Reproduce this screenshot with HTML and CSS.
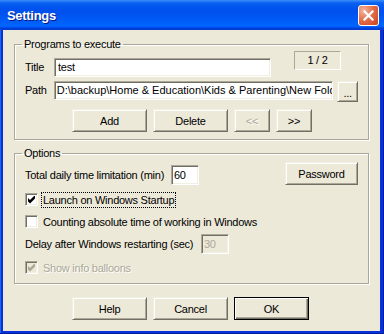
FILE: index.html
```html
<!DOCTYPE html>
<html>
<head>
<meta charset="utf-8">
<link rel="stylesheet" href="styles.css">
</head>
<body>
<div class="window">
  <div class="titlebar">
    <span class="title">Settings</span>
    <span class="close"><svg width="11" height="11" viewBox="0 0 11 11"><path d="M1.5 1.5 L9.5 9.5 M9.5 1.5 L1.5 9.5" stroke="#fff" stroke-width="2.2" stroke-linecap="square"/></svg></span>
  </div>
  <div class="client">
    <fieldset class="group g1">
      <legend>Programs to execute</legend>
      <div class="r1">
        <div class="field">
          <span class="lbl lbl-s">Title</span>
          <div class="edit e-title">test</div>
        </div>
        <div class="counter">1 / 2</div>
      </div>
      <div class="r2">
        <span class="lbl lbl-s">Path</span>
        <div class="edit e-path">D:\backup\Home &amp; Education\Kids &amp; Parenting\New Folder</div>
        <div class="btn b-browse">...</div>
      </div>
      <div class="btnrow">
        <div class="btn">Add</div>
        <div class="btn">Delete</div>
        <div class="btn narrow dis">&lt;&lt;</div>
        <div class="btn narrow">&gt;&gt;</div>
      </div>
    </fieldset>
    <fieldset class="group g2">
      <legend>Options</legend>
      <div class="o1">
        <div class="field-o">
          <span class="lbl lbl-total">Total daily time limitation (min)</span>
          <div class="edit e-num">60</div>
        </div>
        <div class="btn b-pass">Password</div>
      </div>
      <div class="check-row">
        <span class="cb"><svg width="11" height="11" viewBox="0 0 11 11"><polygon points="2,4 4,6 8,2 9,2 9,4.6 4,9.6 2,7.6" fill="#000"/></svg></span>
        <span class="cb-label focus">Launch on Windows Startup</span>
      </div>
      <div class="check-row">
        <span class="cb"></span>
        <span class="cb-label">Counting absolute time of working in Windows</span>
      </div>
      <div class="o4">
        <span class="lbl lbl-delay">Delay after Windows restarting (sec)</span>
        <div class="edit e-num dis">30</div>
      </div>
      <div class="check-row last">
        <span class="cb dis"><svg width="11" height="11" viewBox="0 0 11 11"><polygon points="2,4 4,6 8,2 9,2 9,4.6 4,9.6 2,7.6" fill="#ACA899"/></svg></span>
        <span class="cb-label dis">Show info balloons</span>
      </div>
    </fieldset>
    <div class="btnrow bottom">
      <div class="btn">Help</div>
      <div class="btn">Cancel</div>
      <div class="btn def">OK</div>
    </div>
  </div>
</div>
</body>
</html>
```
FILE: styles.css
```css
* { box-sizing: border-box; }
html, body { margin: 0; padding: 0; }
body {
  font-family: "Liberation Sans", Arial, sans-serif;
  font-size: 11px;
  letter-spacing: -0.25px;
  color: #000;
}
.window {
  width: 384px;
  height: 334px;
  display: flex;
  flex-direction: column;
  background: #0831D9;
  box-shadow: inset -1px -1px 0 #001EA0, inset 1px 0 0 #166AEE;
}
.titlebar {
  height: 30px;
  flex: none;
  display: flex;
  align-items: flex-start;
  justify-content: space-between;
  padding: 0 5px 0 7px;
  background: linear-gradient(180deg, #3C8FF9 0, #0A60F0 3px, #0053EE 8px, #0050EE 12px, #0062FA 24px, #0066FF 26px, #005BFF 27px, #003DD7 28px, #003DD7 30px);
}
.title {
  margin-top: 8px;
  font-weight: bold;
  font-size: 13px;
  line-height: 16px;
  letter-spacing: -0.3px;
  color: #fff;
  text-shadow: 1px 1px 0 #0A1883;
}
.close {
  margin-top: 5px;
  width: 21px;
  height: 21px;
  border: 1px solid #fff;
  border-radius: 3px;
  background: radial-gradient(circle at 25% 25%, #F4B49A 0, #E4704E 45%, #D4512E 80%, #C2431F 100%);
  display: flex;
  align-items: center;
  justify-content: center;
}
.client {
  flex: 1;
  margin: 0 4px 3px 3px;
  background: #ECE9D8;
  display: flex;
  flex-direction: column;
}
.group {
  margin: 7px 11px 0;
  padding: 0 10px 7px;
  min-width: 0;
  border: 1px solid #ACA899;
  box-shadow: inset 1px 1px 0 #fff, 1px 1px 0 #fff;
}
.group legend {
  padding: 0 2px;
  margin-left: -3px;
  line-height: 14px;
}
.g2 { margin-top: 6px; }
.lbl { line-height: 19px; white-space: nowrap; }
.r1 { display: flex; align-items: flex-start; }
.field { display: flex; align-items: center; margin-top: 7px; }
.lbl-s { width: 29px; }
.edit {
  height: 19px;
  border: 1px solid;
  border-color: #ACA899 #fff #fff #ACA899;
  box-shadow: inset 1px 1px 0 #716F64, inset -1px -1px 0 #F1EFE2;
  background: #fff;
  padding: 0 2px;
  line-height: 17px;
  white-space: nowrap;
  overflow: hidden;
}
.e-title { width: 217px; padding-left: 3px; }
.counter {
  margin-left: 23px;
  width: 47px;
  height: 19px;
  border: 1px solid;
  border-color: #ACA899 #fff #fff #ACA899;
  text-align: center;
  line-height: 17px;
}
.r2 { display: flex; align-items: flex-start; margin-top: 4px; }
.e-path { width: 282px; letter-spacing: 0; }
.btn {
  width: 75px;
  height: 23px;
  border: 1px solid;
  border-color: #F1EFE2 #716F64 #716F64 #F1EFE2;
  box-shadow: inset 1px 1px 0 #fff, inset -1px -1px 0 #ACA899;
  background: #ECE9D8;
  display: flex;
  align-items: center;
  justify-content: center;
  white-space: nowrap;
}
.b-browse { margin-left: 4px; width: 21px; height: 21px; padding-top: 3px; }
.btn.narrow { width: 36px; }
.btn.dis { color: #ACA899; text-shadow: 1px 1px 0 #fff; }
.btn.def {
  border-color: #000;
  box-shadow: inset 1px 1px 0 #fff, inset -1px -1px 0 #716F64, inset -2px -2px 0 #ACA899;
}
.btnrow { display: flex; gap: 6px; }
.g1 .btnrow { margin-top: 7px; padding-left: 47px; }
.o1 { display: flex; align-items: flex-end; margin-top: 2px; }
.field-o { display: flex; align-items: center; }
.lbl-total { width: 146px; line-height: 20px; }
.e-num { width: 28px; height: 20px; line-height: 18px; }
.e-num.dis { background: #ECE9D8; color: #ACA899; }
.b-pass { margin-left: 86px; }
.check-row { display: flex; align-items: center; height: 17px; margin-top: 6px; }
.check-row + .check-row { margin-top: 5px; }
.check-row.last { margin-top: 5px; }
.cb {
  flex: none;
  width: 13px;
  height: 13px;
  border: 1px solid;
  border-color: #ACA899 #fff #fff #ACA899;
  box-shadow: inset 1px 1px 0 #716F64, inset -1px -1px 0 #F1EFE2;
  background: #fff;
  display: flex;
}
.cb svg { display: block; }
.cb.dis { background: #ECE9D8; }
.cb-label {
  margin-left: 3px;
  padding: 0 1px;
  border: 1px dotted transparent;
  line-height: 14px;
  white-space: nowrap;
}
.cb-label.focus { border-color: #000; }
.cb-label.dis { color: #ACA899; text-shadow: 1px 1px 0 #fff; }
.o4 { display: flex; align-items: center; margin-top: 4px; }
.lbl-delay { width: 176px; line-height: 20px; }
.bottom { margin: 13px 0 0 69px; }
```
